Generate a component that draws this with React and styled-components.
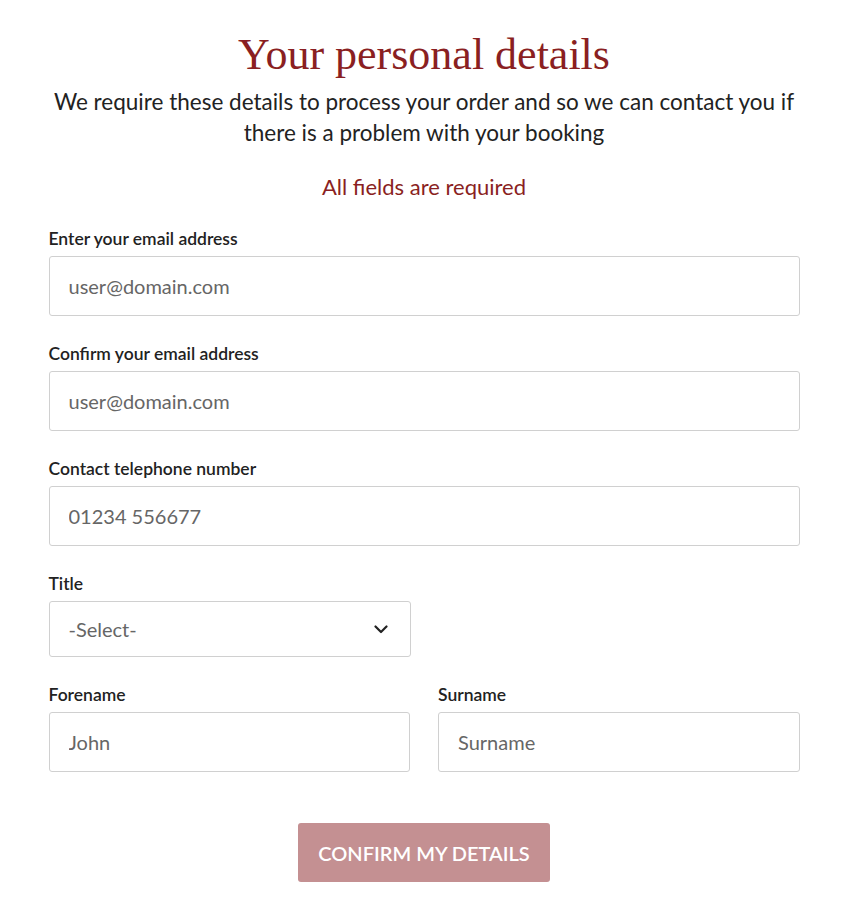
import React from 'react'
import styled, { createGlobalStyle } from 'styled-components'

const GlobalStyle = createGlobalStyle`
  body {
    margin: 0;
    background: #fff;
    font-family: Lato, "Open Sans", sans-serif;
  }
`

const Page = styled.div`
  width: 751px;
  margin: 0 auto;
  padding: 28px 0 0 2px;
`

const Heading = styled.h1`
  margin: 0;
  font-family: "Liberation Serif", serif;
  font-size: 44px;
  font-weight: 400;
  line-height: 54px;
  color: #8a1f22;
  text-align: center;
`

const Intro = styled.p`
  margin: 4px -2px 0;
  font-family: Lato, sans-serif;
  font-size: 22.5px;
  line-height: 31px;
  color: #222;
  text-align: center;
`

const Required = styled.p`
  margin: 25px 0 0;
  font-size: 22px;
  line-height: 28px;
  color: #8a1f22;
  text-align: center;
`

const Form = styled.form`
  margin-top: 28px;
  display: flex;
  flex-direction: column;
  gap: 28px;
`

const Row = styled.div`
  display: grid;
  grid-template-columns: 1fr 1fr;
  gap: 28px;
`

const Field = styled.div`
  display: flex;
  flex-direction: column;
  gap: 7px;
  width: ${({ $half }) => ($half ? '362px' : '100%')};
`

const Label = styled.label`
  font-size: 17.5px;
  line-height: 20px;
  font-weight: 600;
  color: #222;
`

const Input = styled.input`
  box-sizing: border-box;
  height: 60px;
  width: 100%;
  padding: 0 19px;
  border: 1px solid #d0d0d0;
  border-radius: 3px;
  font-family: Lato, sans-serif;
  font-size: 20px;
  color: #333;
  background: #fff;
  outline: none;
  &::placeholder {
    color: #666;
  }
`

const SelectBox = styled.div`
  box-sizing: border-box;
  height: 56px;
  display: flex;
  align-items: center;
  justify-content: space-between;
  padding: 0 22px 0 19px;
  border: 1px solid #d0d0d0;
  border-radius: 3px;
  font-size: 20px;
  color: #666;
`

const Actions = styled.div`
  display: flex;
  justify-content: center;
  margin-top: 23px;
`

const Button = styled.button`
  width: 252px;
  height: 59px;
  border: none;
  border-radius: 3px;
  background: #c49092;
  color: #fff;
  font-family: Lato, sans-serif;
  font-size: 20px;
  font-weight: 600;
  text-transform: uppercase;
  cursor: pointer;
`

const Chevron = () => (
  <svg width="14" height="9" viewBox="0 0 14 9" fill="none">
    <path d="M1.5 1.5 L7 7 L12.5 1.5" stroke="#222" strokeWidth="2.2" strokeLinecap="round" strokeLinejoin="round" />
  </svg>
)

export default function App() {
  return (
    <Page>
      <GlobalStyle />
      <Heading>Your personal details</Heading>
      <Intro>
        We require these details to process your order and so we can contact you if there is a problem with
        your booking
      </Intro>
      <Required>All fields are required</Required>
      <Form onSubmit={(e) => e.preventDefault()}>
        <Field>
          <Label>Enter your email address</Label>
          <Input placeholder="user@domain.com" />
        </Field>
        <Field>
          <Label>Confirm your email address</Label>
          <Input placeholder="user@domain.com" />
        </Field>
        <Field>
          <Label>Contact telephone number</Label>
          <Input placeholder="01234 556677" />
        </Field>
        <Field $half>
          <Label>Title</Label>
          <SelectBox>
            <span>-Select-</span>
            <Chevron />
          </SelectBox>
        </Field>
        <Row>
          <Field>
            <Label>Forename</Label>
            <Input placeholder="John" />
          </Field>
          <Field>
            <Label>Surname</Label>
            <Input placeholder="Surname" />
          </Field>
        </Row>
        <Actions>
          <Button type="submit">Confirm my details</Button>
        </Actions>
      </Form>
    </Page>
  )
}
